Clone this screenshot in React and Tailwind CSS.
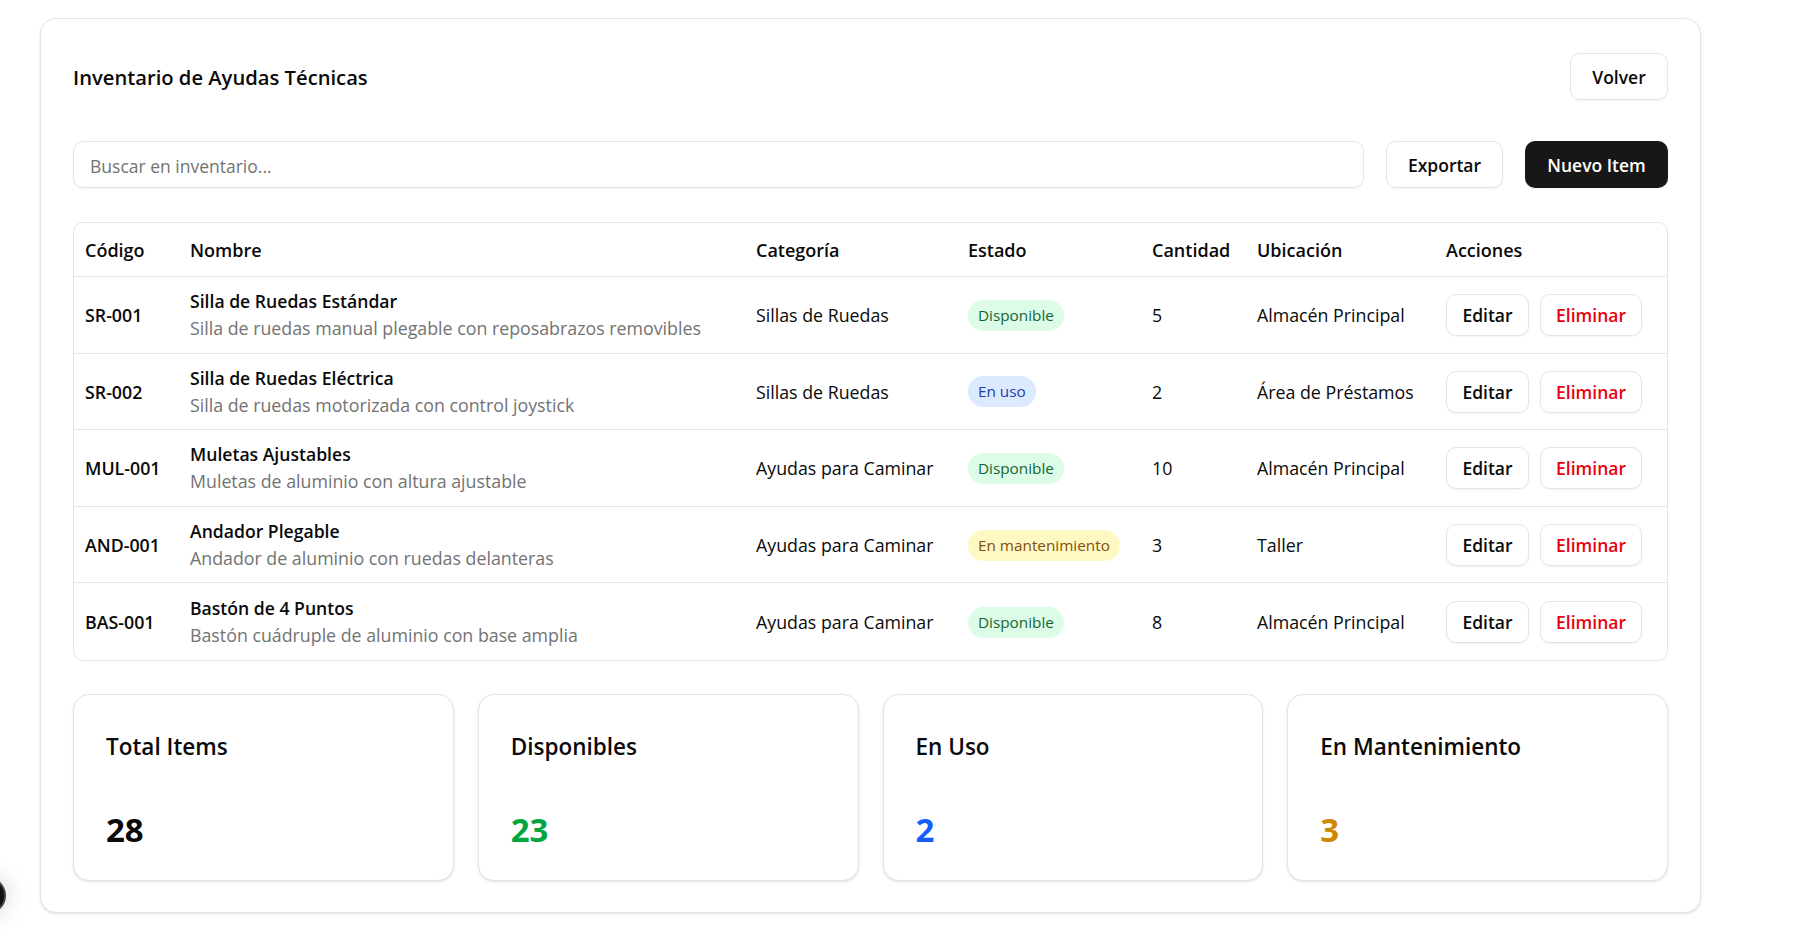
import React from "react";

const rows = [
  {
    code: "SR-001",
    name: "Silla de Ruedas Estándar",
    desc: "Silla de ruedas manual plegable con reposabrazos removibles",
    cat: "Sillas de Ruedas",
    status: "Disponible",
    qty: "5",
    loc: "Almacén Principal",
  },
  {
    code: "SR-002",
    name: "Silla de Ruedas Eléctrica",
    desc: "Silla de ruedas motorizada con control joystick",
    cat: "Sillas de Ruedas",
    status: "En uso",
    qty: "2",
    loc: "Área de Préstamos",
  },
  {
    code: "MUL-001",
    name: "Muletas Ajustables",
    desc: "Muletas de aluminio con altura ajustable",
    cat: "Ayudas para Caminar",
    status: "Disponible",
    qty: "10",
    loc: "Almacén Principal",
  },
  {
    code: "AND-001",
    name: "Andador Plegable",
    desc: "Andador de aluminio con ruedas delanteras",
    cat: "Ayudas para Caminar",
    status: "En mantenimiento",
    qty: "3",
    loc: "Taller",
  },
  {
    code: "BAS-001",
    name: "Bastón de 4 Puntos",
    desc: "Bastón cuádruple de aluminio con base amplia",
    cat: "Ayudas para Caminar",
    status: "Disponible",
    qty: "8",
    loc: "Almacén Principal",
  },
];

function Badge({ status }) {
  if (status === "Disponible")
    return (
      <span className="inline-flex h-[31px] items-center rounded-full bg-[#dcfce7] px-[10px] text-[15.3px] text-[#166534]">
        {status}
      </span>
    );
  if (status === "En uso")
    return (
      <span className="inline-flex h-[31px] items-center rounded-full bg-[#dbeafe] px-[10px] text-[15.3px] text-[#1e40af]">
        {status}
      </span>
    );
  return (
    <span className="inline-flex h-[31px] items-center rounded-full bg-[#fef9c3] px-[10px] text-[15.3px] text-[#854d0e]">
      {status}
    </span>
  );
}

const cols = "grid grid-cols-[105px_566px_212px_184px_105px_189px_232px]";

function Stat({ title, value, color }) {
  return (
    <div className="h-[187px] rounded-[16px] border border-neutral-200 bg-white px-[32px] pt-[35px] shadow-sm">
      <div className="text-[22.5px] font-semibold leading-[34px] text-[#0a0a0a]">{title}</div>
      <div className={`mt-[46px] text-[33px] font-bold leading-[40px] ${color}`}>{value}</div>
    </div>
  );
}

export default function App() {
  return (
    <div className="relative min-h-screen bg-white font-['Open_Sans',sans-serif] text-[#0a0a0a]">
      <div className="pl-[40px] pt-[18px]">
        <div className="w-[1661px] rounded-[16px] border border-neutral-200 bg-white px-[32px] pb-[31px] pt-[34px] shadow-sm">
          <div className="flex h-[47px] items-center justify-between">
            <h1 className="pt-[2px] text-[20.2px] font-semibold">Inventario de Ayudas Técnicas</h1>
            <button className="h-[47px] w-[98px] rounded-[10px] border border-neutral-200 bg-white pt-[1px] text-[17.5px] font-semibold shadow-xs">
              Volver
            </button>
          </div>

          <div className="mt-[41px] flex gap-[22px]">
            <input
              className="h-[47px] flex-1 rounded-[10px] border border-neutral-200 px-[16px] pt-[2px] text-[17.5px] shadow-xs outline-none placeholder:text-[#737373]"
              placeholder="Buscar en inventario..."
            />
            <button className="h-[47px] w-[117px] rounded-[10px] border border-neutral-200 bg-white pt-[2px] text-[17.5px] font-semibold shadow-xs">
              Exportar
            </button>
            <button className="h-[47px] w-[143px] rounded-[10px] bg-[#171717] pt-[2px] text-[17.5px] font-semibold text-white shadow-xs">
              Nuevo Item
            </button>
          </div>

          <div className="mt-[34px] rounded-[10px] border border-neutral-200">
            <div className={`${cols} h-[54px] items-center border-b border-neutral-200 pt-[2px] text-[18px] font-semibold`}>
              <div className="pl-[11px]">Código</div>
              <div className="pl-[11px]">Nombre</div>
              <div className="pl-[11px]">Categoría</div>
              <div className="pl-[11px]">Estado</div>
              <div className="pl-[11px]">Cantidad</div>
              <div className="pl-[11px]">Ubicación</div>
              <div className="pl-[11px]">Acciones</div>
            </div>
            {rows.map((r, i) => (
              <div
                key={r.code}
                className={`${cols} h-[76.6px] items-center pt-[1px] text-[17.8px] ${i < rows.length - 1 ? "border-b border-neutral-200" : ""}`}
              >
                <div className="pl-[11px] font-semibold">{r.code}</div>
                <div className="pl-[11px]">
                  <div className="text-[17.6px] font-semibold leading-[27px]">{r.name}</div>
                  <div className="leading-[27px] text-[#737373]">{r.desc}</div>
                </div>
                <div className="pl-[11px]">{r.cat}</div>
                <div className="pl-[11px]">
                  <Badge status={r.status} />
                </div>
                <div className="pl-[11px]">{r.qty}</div>
                <div className="pl-[11px]">{r.loc}</div>
                <div className="flex gap-[11px] pl-[11px]">
                  <button className="h-[42px] w-[83px] rounded-[10px] border border-neutral-200 bg-white text-[17.5px] font-semibold shadow-xs">
                    Editar
                  </button>
                  <button className="h-[42px] w-[102px] rounded-[10px] border border-neutral-200 bg-white text-[17.5px] font-semibold text-red-600 shadow-xs">
                    Eliminar
                  </button>
                </div>
              </div>
            ))}
          </div>

          <div className="mt-[33px] grid grid-cols-4 gap-[24px]">
            <Stat title="Total Items" value="28" color="text-[#0a0a0a]" />
            <Stat title="Disponibles" value="23" color="text-green-600" />
            <Stat title="En Uso" value="2" color="text-blue-600" />
            <Stat title="En Mantenimiento" value="3" color="text-yellow-600" />
          </div>
        </div>
      </div>
      <div className="absolute left-[-31px] top-[877px] h-[37px] w-[37px] rounded-full border-2 border-[#444] bg-[#111] shadow-[0_0_24px_rgba(0,0,0,0.18)]" />
    </div>
  );
}
